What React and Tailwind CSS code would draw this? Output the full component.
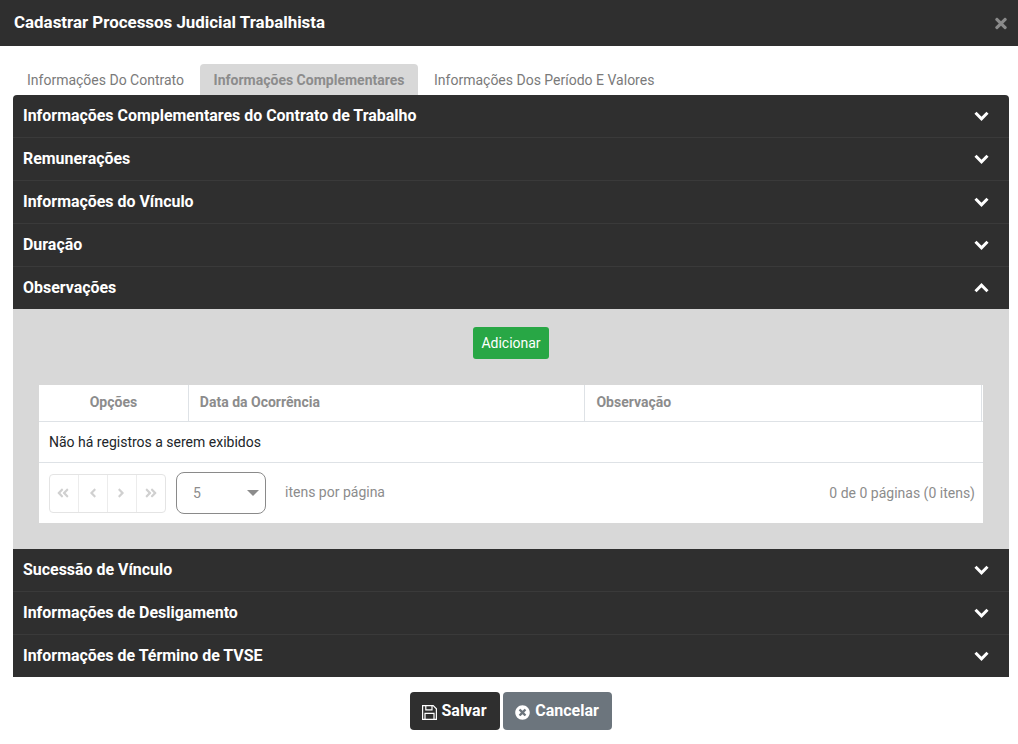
import React from "react";
import { FaTimesCircle, FaTimes, FaAngleDoubleLeft, FaAngleDoubleRight, FaAngleLeft, FaAngleRight } from "react-icons/fa";

function Chevron({ up }) {
  return (
    <svg width="15" height="10" viewBox="0 0 15 10" fill="none">
      <path d={up ? "M1.5 8.2 L7.5 2.2 L13.5 8.2" : "M1.5 1.8 L7.5 7.8 L13.5 1.8"} stroke="#fff" strokeWidth="3" />
    </svg>
  );
}

function Row({ title, open, last }) {
  return (
    <div className={`flex items-center justify-between pl-[10px] pr-[20px] bg-[#2f2f2f] ${last ? "h-[42px]" : "h-[43px] border-b border-[#3a3a3a]"}`}>
      <span className="text-white font-bold text-[15.95px]">{title}</span>
      <Chevron up={open} />
    </div>
  );
}

export default function App() {
  return (
    <div className="w-[1018px] h-[744px] bg-white overflow-hidden flex flex-col font-['Roboto',sans-serif]">
      <div className="h-[46px] shrink-0 bg-[#2f2f2f] flex items-center justify-between pl-[14px] pr-[11px]">
        <span className="text-white font-bold text-[16.9px]">Cadastrar Processos Judicial Trabalhista</span>
        <FaTimes className="text-[#8a8a8a] w-[12px] h-[17px]" />
      </div>
      <div className="mt-[18px] h-[31px] flex pl-[13px] text-[14px] text-[#7a7a7a]">
        <div className="px-[14px] pt-[2px] mr-[2px] flex items-center">Informações Do Contrato</div>
        <div className="w-[218px] pt-[2px] flex items-center justify-center bg-[#d8d8d8] rounded-t font-bold text-[#8c8c8c]">Informações Complementares</div>
        <div className="px-[16px] pt-[2px] flex items-center">Informações Dos Período E Valores</div>
      </div>
      <div className="ml-[13px] w-[996px] rounded-t overflow-hidden">
        <Row title="Informações Complementares do Contrato de Trabalho" />
        <Row title="Remunerações" />
        <Row title="Informações do Vínculo" />
        <Row title="Duração" />
        <Row title="Observações" open last />
        <div className="h-[240px] bg-[#d8d8d8] flex flex-col items-center pt-[18px] px-[26px]">
          <button className="h-[32px] w-[76px] bg-[#28a745] text-white text-[14px] rounded-[3px]">Adicionar</button>
          <div className="mt-[26px] w-[944px] bg-white">
            <div className="h-[37px] flex border-b border-[#dee2e6] text-[14px] font-bold text-[#8c8c8c]">
              <div className="w-[150px] pb-[2px] border-r border-[#dee2e6] flex items-center justify-center">Opções</div>
              <div className="w-[397px] pb-[2px] border-r border-[#dee2e6] flex items-center pl-[11px]">Data da Ocorrência</div>
              <div className="w-[397px] pb-[2px] border-r border-[#dee2e6] flex items-center pl-[11px] mr-px">Observação</div>
            </div>
            <div className="h-[41px] flex items-center pl-[10px] border-b border-[#dee2e6] text-[14px] text-[#212529]">Não há registros a serem exibidos</div>
            <div className="h-[60px] flex items-center pl-[10px] pr-[8px] text-[14px] text-[#8c8c8c]">
              <div className="w-[117px] h-[39px] flex border border-[#e4e4e4] rounded-[4px] text-[#d0d0d0]">
                <div className="flex-1 flex items-center justify-center border-r border-[#ececec]"><FaAngleDoubleLeft className="w-[14px] h-[14px] -ml-[2px]" /></div>
                <div className="flex-1 flex items-center justify-center border-r border-[#ececec]"><FaAngleLeft className="w-[14px] h-[14px]" /></div>
                <div className="flex-1 flex items-center justify-center border-r border-[#ececec]"><FaAngleRight className="w-[14px] h-[14px] -ml-[2px]" /></div>
                <div className="flex-1 flex items-center justify-center"><FaAngleDoubleRight className="w-[14px] h-[14px]" /></div>
              </div>
              <div className="ml-[10px] w-[90px] h-[42px] border border-[#8a8a8a] rounded-[8px] flex items-center justify-between pl-[16px] pr-[6px]">
                <span>5</span>
                <svg width="12" height="6" viewBox="0 0 12 6"><path d="M0 0h12L6 6z" fill="#8c8c8c" /></svg>
              </div>
              <span className="ml-[19px] -mt-[1px]">itens por página</span>
              <span className="ml-auto">0 de 0 páginas (0 itens)</span>
            </div>
          </div>
        </div>
        <Row title="Sucessão de Vínculo" />
        <Row title="Informações de Desligamento" />
        <Row title="Informações de Término de TVSE" last />
      </div>
      <div className="mt-[15px] flex justify-center gap-[3px] pl-[3px]">
        <button className="w-[90px] h-[38px] bg-[#2f2f2f] text-white font-bold text-[16px] rounded-[4px] flex items-center justify-center gap-[4px]">
          <svg width="15" height="15" viewBox="0 0 15 15" fill="none" stroke="#fff" strokeWidth="1.2" className="mt-[2px]">
            <path d="M0.6 0.6h10.6l3.2 3.2v10.6H0.6z M3.8 0.6v4.2h6.2V0.6 M3 14.4V8.4h9v6" />
          </svg>
          Salvar
        </button>
        <button className="w-[109px] h-[38px] bg-[#6c757d] text-white font-bold text-[16px] rounded-[4px] flex items-center justify-center gap-[5px]">
          <FaTimesCircle className="w-[15px] h-[15px] mt-[3px]" />Cancelar
        </button>
      </div>
    </div>
  );
}
